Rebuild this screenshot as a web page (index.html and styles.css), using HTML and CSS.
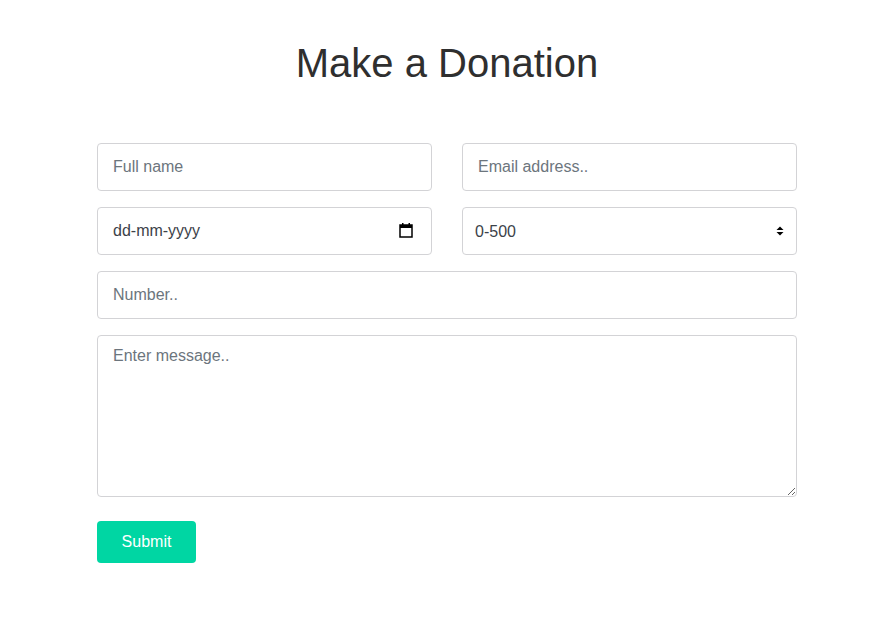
FILE: index.html
```html
<!DOCTYPE html>
<html lang="en">
<head>
<meta charset="utf-8">
<title>Make a Donation</title>
<link rel="stylesheet" href="styles.css">
</head>
<body>
<main class="page">
  <h1 class="title">Make a Donation</h1>
  <form class="form">
    <div class="row two">
      <input class="field" type="text" placeholder="Full name">
      <input class="field" type="email" placeholder="Email address..">
    </div>
    <div class="row two">
      <div class="wrap">
        <input class="field date" type="text" placeholder="dd-mm-yyyy">
        <svg class="cal" width="14" height="16" viewBox="0 0 14 16" aria-hidden="true">
          <rect x="1" y="3" width="12" height="12" fill="none" stroke="#000" stroke-width="1.5"/>
          <rect x="1" y="3" width="12" height="3" fill="#000"/>
          <rect x="3" y="1" width="1.5" height="3" fill="#000"/>
          <rect x="9.5" y="1" width="1.5" height="3" fill="#000"/>
        </svg>
      </div>
      <div class="wrap">
        <select class="field select">
          <option>0-500</option>
          <option>500-1000</option>
          <option>1000+</option>
        </select>
        <svg class="arrows" width="8" height="10" viewBox="0 0 8 10" aria-hidden="true">
          <path d="M0.5 4 L4 0.5 L7.5 4 Z" fill="#000"/>
          <path d="M0.5 6 L4 9.5 L7.5 6 Z" fill="#000"/>
        </svg>
      </div>
    </div>
    <div class="row">
      <input class="field" type="text" placeholder="Number..">
    </div>
    <div class="row">
      <textarea class="field message" placeholder="Enter message.."></textarea>
    </div>
    <div class="actions">
      <button class="submit" type="submit">Submit</button>
    </div>
  </form>
</main>
</body>
</html>
```

FILE: styles.css
```css
html, body {
  margin: 0;
  padding: 0;
  background: #fff;
}
body {
  font-family: "Liberation Sans", Arial, sans-serif;
  color: #333;
}
.page {
  width: 700px;
  margin-left: 97px;
  padding-top: 38px;
}
.title {
  margin: 0;
  font-size: 40px;
  font-weight: 400;
  line-height: 50px;
  text-align: center;
  color: #2f2f2f;
}
.form {
  margin-top: 55px;
  display: flex;
  flex-direction: column;
  gap: 16px;
}
.row {
  display: flex;
}
.row.two {
  display: grid;
  grid-template-columns: 1fr 1fr;
  column-gap: 30px;
}
.wrap {
  position: relative;
}
.field {
  box-sizing: border-box;
  width: 100%;
  height: 48px;
  margin: 0;
  padding: 0 15px;
  border: 1px solid #d3d3d6;
  border-radius: 4px;
  font-family: "Liberation Sans", Arial, sans-serif;
  font-size: 16px;
  color: #495057;
  background: #fff;
  outline: none;
}
.field::placeholder {
  color: #6c757d;
  opacity: 1;
}
.field.date::placeholder {
  color: #3c4249;
}
.select {
  appearance: none;
  -webkit-appearance: none;
  padding: 0 12px;
  color: #3c4249;
}
.cal {
  position: absolute;
  right: 19px;
  top: 15px;
}
.arrows {
  position: absolute;
  right: 13px;
  top: 19px;
}
.message {
  height: 162px;
  padding: 8px 15px;
  line-height: 24px;
  resize: vertical;
}
.actions {
  margin-top: 8px;
}
.submit {
  width: 99px;
  height: 42px;
  border: none;
  border-radius: 4px;
  background: #00d6a3;
  color: #fff;
  font-family: "Liberation Sans", Arial, sans-serif;
  font-size: 16px;
  cursor: pointer;
}
```
